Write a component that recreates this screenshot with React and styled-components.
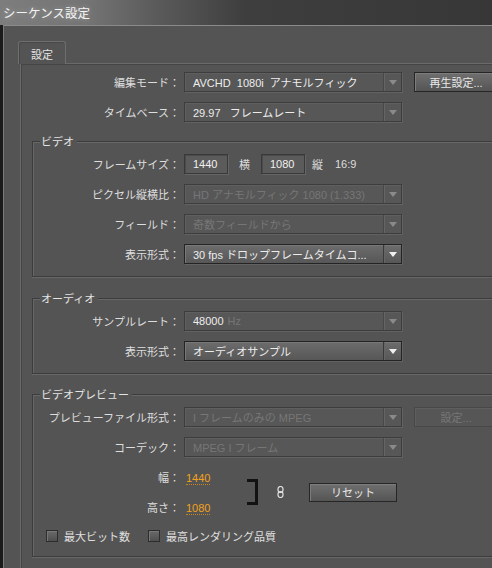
import React from 'react'
import styled, { createGlobalStyle } from 'styled-components'

const GlobalStyle = createGlobalStyle`
  html, body {
    margin: 0;
    padding: 0;
    overflow: hidden;
    background: #1b1b1b;
  }
  body {
    font-family: "Liberation Sans", "Noto Sans CJK JP", sans-serif;
  }
`

const dark = '#3c3c3c'
const light = '#676767'

const Window = styled.div`
  width: 492px;
  height: 568px;
  overflow: hidden;
  display: flex;
  flex-direction: column;
  background: #1b1b1b;
`

const TitleBar = styled.div`
  height: 25px;
  flex: none;
  display: flex;
  align-items: center;
  padding-left: 3px;
  background: linear-gradient(90deg, #7d7d7d 0%, #747474 18%, #5a5a5a 32%, #3e3e3e 50%, #373737 100%);
  color: #f4f4f4;
  font-family: "Noto Sans CJK JP", sans-serif;
  font-size: 12.5px;
  text-shadow: 0 0 5px rgba(255, 255, 255, .35);
`

const Frame = styled.div`
  flex: 1;
  min-width: 0;
  display: flex;
  padding-left: 3px;
`

const Body = styled.div`
  flex: 1;
  min-width: 0;
  background: #545454;
  border-top: 1px solid #8a8a8a;
  border-left: 1px solid #7a7a7a;
  padding: 15px 0 0 16px;
`

const TabStrip = styled.div`
  display: flex;
  height: 23px;
  margin: 0 0 -1px -2px;
  position: relative;
  z-index: 1;
`

const Tab = styled.div`
  width: 48px;
  box-sizing: border-box;
  border: 1px solid #6e6e6e;
  border-bottom: none;
  border-radius: 3px 3px 0 0;
  background: #545454;
  box-shadow: inset 1px 1px 0 #484848;
  color: #e4e4e4;
  font-size: 11px;
  display: flex;
  justify-content: center;
  padding-top: 4px;
`

const TabPage = styled.div`
  border-top: 1px solid #6a6a6a;
  border-left: 1px solid #6a6a6a;
  box-shadow: inset 1px 1px 0 #454545;
  padding: 3px 0 0 11px;
  height: 520px;
`

const TopRows = styled.div`
  padding-left: 1px;
`

const Row = styled.div`
  display: flex;
  align-items: center;
  height: ${p => p.$h || 30}px;
`

const Label = styled.div`
  width: 147px;
  flex: none;
  margin-right: 4px;
  text-align: right;
  font-size: 11px;
  color: #dedede;
  white-space: nowrap;
`

const Group = styled.section`
  margin-top: ${p => p.$gap}px;
`

const GroupHeader = styled.div`
  display: flex;
  align-items: center;
  height: 16px;
  font-size: 11px;
  color: #e4e4e4;
  &::before {
    content: '';
    align-self: flex-end;
    width: 7px;
    height: 7px;
    border-top: 1px solid ${dark};
    border-left: 1px solid ${dark};
    box-shadow: inset 1px 1px 0 ${light};
    margin-right: 1px;
  }
  &::after {
    content: '';
    flex: 1;
    border-top: 1px solid ${dark};
    box-shadow: 0 1px 0 ${light};
    margin-left: 3px;
  }
`

const GroupBody = styled.div`
  border-left: 1px solid ${dark};
  border-bottom: 1px solid ${dark};
  box-shadow: inset 1px 0 0 ${light}, 0 1px 0 ${light};
  padding-bottom: ${p => p.$pb}px;
`

const SelectBox = styled.div`
  width: 218px;
  height: 20px;
  flex: none;
  box-sizing: border-box;
  display: flex;
  border: 1px solid ${p => (p.$strong ? '#242424' : '#3d3d3d')};
  background: ${p => (p.$strong ? 'linear-gradient(#6c6c6c, #575757)' : '#575757')};
  box-shadow: inset 1px 1px 0 ${p => (p.$strong ? '#787878' : '#5f5f5f')}, 1px 1px 0 #626262;
`

const SelectValue = styled.div`
  flex: 1;
  display: flex;
  align-items: center;
  padding-left: 8px;
  font-size: 11px;
  color: ${p => (p.$disabled ? '#767676' : '#ededed')};
  white-space: nowrap;
  overflow: hidden;
`

const Dim = styled.span`
  color: #767676;
  margin-left: 4px;
`

const SelectArrow = styled.div`
  width: 17px;
  flex: none;
  border-left: 1px solid ${p => (p.$strong ? '#3a3a3a' : '#484848')};
  box-shadow: inset 1px 0 0 #656565;
  display: flex;
  align-items: center;
  justify-content: center;
  &::after {
    content: '';
    border-left: 4px solid transparent;
    border-right: 4px solid transparent;
    border-top: 5px solid ${p => (p.$strong ? '#f0f0f0' : '#8a8a8a')};
  }
`

const NumInput = styled.input`
  width: 44px;
  height: 20px;
  box-sizing: border-box;
  margin: 0;
  border: 1px solid #393939;
  background: #5b5b5b;
  box-shadow: inset 1px 1px 0 #4b4b4b, 1px 1px 0 #656565;
  padding: 0 0 0 8px;
  font-family: inherit;
  font-size: 11px;
  color: #f0f0f0;
  outline: none;
`

const Unit = styled.span`
  font-size: 11px;
  color: #dedede;
  margin: 0 ${p => p.$mr}px 0 ${p => p.$ml}px;
`

const Button = styled.button`
  width: ${p => p.$w}px;
  height: ${p => p.$h || 20}px;
  flex: none;
  margin-left: ${p => p.$ml || 0}px;
  padding: 0;
  font-family: inherit;
  font-size: 11px;
  color: ${p => (p.disabled ? '#767676' : '#e8e8e8')};
  border: 1px solid ${p => (p.disabled ? '#484848' : '#262626')};
  background: ${p => (p.disabled ? '#565656' : 'linear-gradient(#6f6f6f, #555)')};
  box-shadow: inset 1px 1px 0 ${p => (p.disabled ? '#5e5e5e' : '#7d7d7d')};
`

const DimBlock = styled.div`
  display: flex;
  align-items: center;
`

const MetricCell = styled.div`
  width: 63px;
  flex: none;
`

const Metric = styled.span`
  margin-left: 2px;
  font-size: 11px;
  color: #f2a21c;
  border-bottom: 1px dotted #c9861c;
`

const Bracket = styled.div`
  width: 8px;
  height: 20px;
  border: 3px solid #121212;
  border-left: none;
`

const LinkIcon = styled.svg`
  margin-left: 19px;
  flex: none;
`

const CheckRow = styled.div`
  display: flex;
  align-items: center;
  height: 28px;
  padding-left: 13px;
`

const Check = styled.span`
  width: 12px;
  height: 12px;
  box-sizing: border-box;
  border: 1px solid #2c2c2c;
  background: linear-gradient(#6a6a6a, #4f4f4f);
  box-shadow: inset 1px 1px 0 #777;
  margin: 0 6px 0 ${p => p.$ml || 0}px;
`

const CheckText = styled.span`
  font-size: 11px;
  color: #e0e0e0;
`

function Select({ children, disabled, strong }) {
  return (
    <SelectBox $strong={strong}>
      <SelectValue $disabled={disabled}>{children}</SelectValue>
      <SelectArrow $strong={strong} />
    </SelectBox>
  )
}

export default function App() {
  return (
    <Window>
      <GlobalStyle />
      <TitleBar>シーケンス設定</TitleBar>
      <Frame>
        <Body>
          <TabStrip>
            <Tab>設定</Tab>
          </TabStrip>
          <TabPage>
            <TopRows>
              <Row>
                <Label>編集モード：</Label>
                <Select>AVCHD&nbsp;&nbsp;1080i&nbsp;&nbsp;アナモルフィック</Select>
                <Button $w={84} $ml={12}>再生設定...</Button>
              </Row>
              <Row>
                <Label>タイムベース：</Label>
                <Select>29.97&nbsp;&nbsp;&nbsp;フレームレート</Select>
              </Row>
            </TopRows>

            <Group $gap={6}>
              <GroupHeader>ビデオ</GroupHeader>
              <GroupBody $pb={7}>
                <Row>
                  <Label>フレームサイズ：</Label>
                  <NumInput readOnly value="1440" />
                  <Unit $ml={11} $mr={11}>横</Unit>
                  <NumInput readOnly value="1080" />
                  <Unit $ml={7} $mr={12}>縦</Unit>
                  <Unit $ml={0} $mr={0}>16:9</Unit>
                </Row>
                <Row>
                  <Label>ピクセル縦横比：</Label>
                  <Select disabled>HD アナモルフィック 1080 (1.333)</Select>
                </Row>
                <Row>
                  <Label>フィールド：</Label>
                  <Select disabled>奇数フィールドから</Select>
                </Row>
                <Row>
                  <Label>表示形式：</Label>
                  <Select strong>30 fps ドロップフレームタイムコ...</Select>
                </Row>
              </GroupBody>
            </Group>

            <Group $gap={13}>
              <GroupHeader>オーディオ</GroupHeader>
              <GroupBody $pb={7}>
                <Row>
                  <Label>サンプルレート：</Label>
                  <Select>48000<Dim>Hz</Dim></Select>
                </Row>
                <Row>
                  <Label>表示形式：</Label>
                  <Select strong>オーディオサンプル</Select>
                </Row>
              </GroupBody>
            </Group>

            <Group $gap={12}>
              <GroupHeader>ビデオプレビュー</GroupHeader>
              <GroupBody $pb={6}>
                <Row>
                  <Label>プレビューファイル形式：</Label>
                  <Select disabled>I フレームのみの MPEG</Select>
                  <Button $w={84} $ml={12} disabled>設定...</Button>
                </Row>
                <Row>
                  <Label>コーデック：</Label>
                  <Select disabled>MPEG I フレーム</Select>
                </Row>
                <DimBlock>
                  <div>
                    <Row>
                      <Label>幅：</Label>
                      <MetricCell><Metric>1440</Metric></MetricCell>
                    </Row>
                    <Row>
                      <Label>高さ：</Label>
                      <MetricCell><Metric>1080</Metric></MetricCell>
                    </Row>
                  </div>
                  <Bracket />
                  <LinkIcon width="7" height="12" viewBox="0 0 7 12">
                    <rect x="1" y="0.5" width="5" height="6" rx="2.5" fill="none" stroke="#e2e2e2" strokeWidth="1.2" />
                    <rect x="1" y="5.5" width="5" height="6" rx="2.5" fill="none" stroke="#e2e2e2" strokeWidth="1.2" />
                  </LinkIcon>
                  <Button $w={88} $h={19} $ml={25}>リセット</Button>
                </DimBlock>
                <CheckRow>
                  <Check />
                  <CheckText>最大ビット数</CheckText>
                  <Check $ml={18} />
                  <CheckText>最高レンダリング品質</CheckText>
                </CheckRow>
              </GroupBody>
            </Group>
          </TabPage>
        </Body>
      </Frame>
    </Window>
  )
}
